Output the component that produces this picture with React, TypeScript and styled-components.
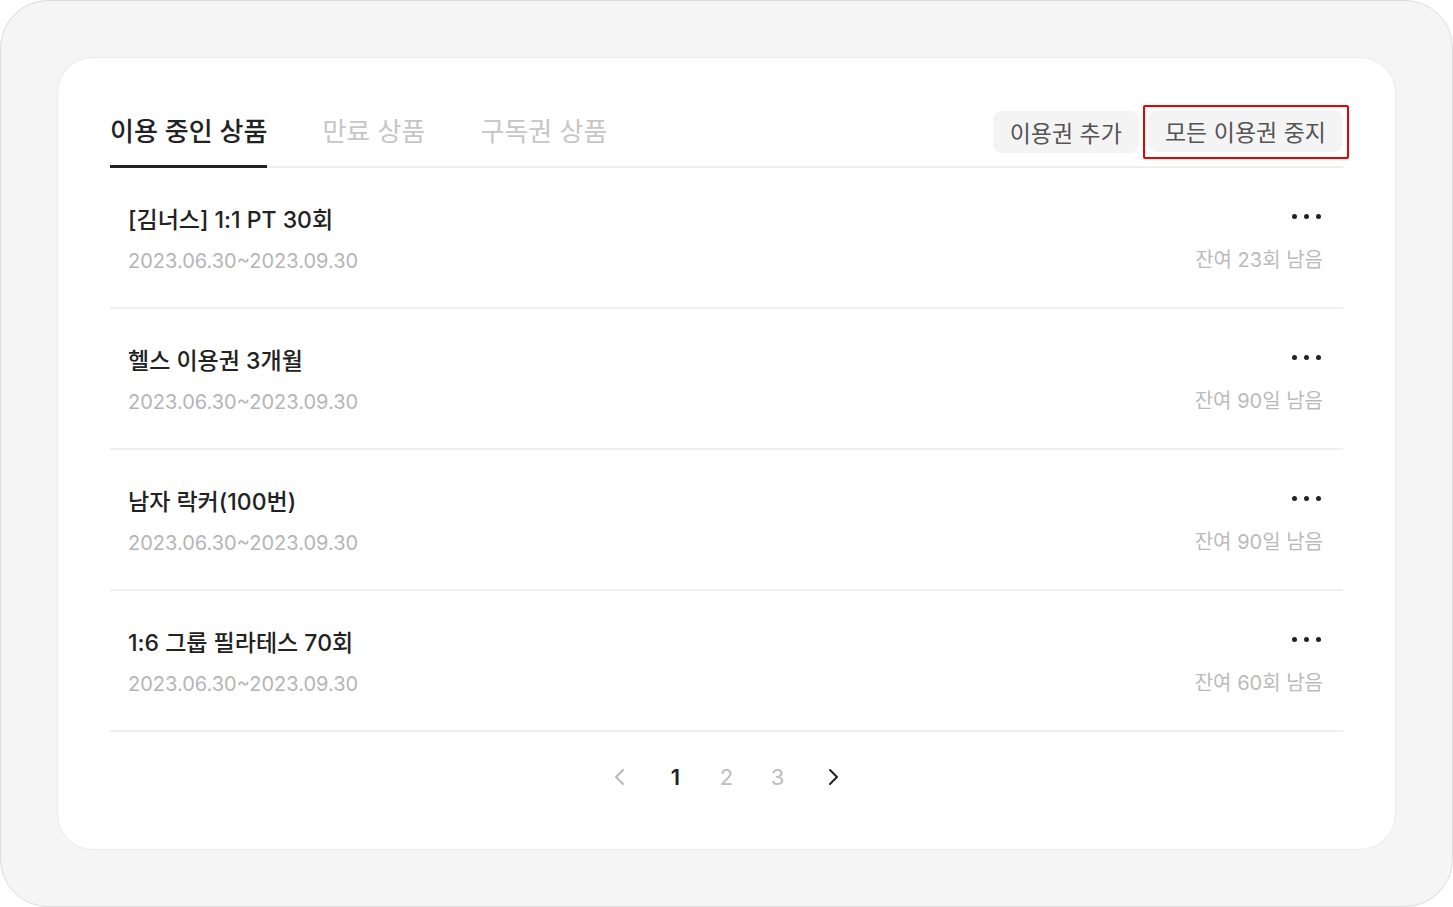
import React from "react";
import styled, { createGlobalStyle } from "styled-components";

const GlobalStyle = createGlobalStyle`
  html, body { margin: 0; padding: 0; background: #ffffff; }
  body { font-family: Inter, "Noto Sans CJK KR", sans-serif; }
  * { box-sizing: border-box; }
`;

const Frame = styled.div`
  width: 1453px;
  height: 907px;
  background: #f5f5f5;
  border: 1px solid #dcdcdc;
  border-radius: 48px;
  padding: 56px;
`;

const Card = styled.div`
  height: 793px;
  background: #ffffff;
  border: 1px solid #ebebeb;
  border-radius: 36px;
  padding: 47px 52px 0 52px;
  display: flex;
  flex-direction: column;
`;

const Header = styled.div`
  display: flex;
  align-items: flex-end;
  justify-content: space-between;
  border-bottom: 2px solid #eeeeee;
`;

const Tabs = styled.div`
  display: flex;
  gap: 55px;
`;

const Tab = styled.div<{ $active?: boolean }>`
  font-size: 26px;
  line-height: 34px;
  padding-bottom: 16px;
  margin-bottom: -2px;
  border-bottom: 3px solid ${(p) => (p.$active ? "#222222" : "transparent")};
  color: ${(p) => (p.$active ? "#222222" : "#c6c6c6")};
  font-weight: ${(p) => (p.$active ? 500 : 400)};
`;

const Actions = styled.div`
  display: flex;
  align-items: center;
  gap: 4px;
  padding-bottom: 7px;
`;

const Highlight = styled.div`
  border: 2px solid #ee0000;
  border-radius: 2px;
  padding: 3px 4px 5px 3px;
  margin-right: -6px;
`;

const ActionButton = styled.button`
  display: block;
  height: 42px;
  padding: 0 17px;
  border: none;
  border-radius: 9px;
  background: #f4f4f4;
  color: #555555;
  font-family: Inter, "Noto Sans CJK KR", sans-serif;
  font-size: 23px;
`;

const List = styled.div`
  display: flex;
  flex-direction: column;
`;

const Row = styled.div`
  height: 141px;
  border-bottom: 2px solid #efefef;
  padding: 36px 20px 0 18px;
  display: flex;
  justify-content: space-between;
`;

const Left = styled.div`
  display: flex;
  flex-direction: column;
  gap: 11px;
`;

const Title = styled.div`
  font-size: 23px;
  line-height: 32px;
  color: #222222;
  font-weight: 450;
`;

const Period = styled.div`
  font-size: 20px;
  line-height: 28px;
  color: #b5b5b5;
`;

const Right = styled.div`
  display: flex;
  flex-direction: column;
  align-items: flex-end;
`;

const MoreButton = styled.div`
  display: flex;
  gap: 7px;
  height: 28px;
  align-items: center;
  padding-right: 2px;
  margin-top: -2px;
  margin-bottom: 16px;
`;

const Dot = styled.span`
  width: 5px;
  height: 5px;
  border-radius: 50%;
  background: #222222;
`;

const Remain = styled.div`
  font-size: 20px;
  line-height: 28px;
  color: #bababa;
`;

const Pagination = styled.div`
  display: flex;
  justify-content: center;
  align-items: center;
  padding-top: 30px;
`;

const PageArrow = styled.div`
  width: 60px;
  height: 30px;
  display: flex;
  align-items: center;
  justify-content: center;
`;

const PageNum = styled.div<{ $active?: boolean }>`
  width: 51px;
  text-align: center;
  font-size: 22px;
  line-height: 30px;
  font-weight: ${(p) => (p.$active ? 600 : 400)};
  color: ${(p) => (p.$active ? "#222222" : "#bdbdbd")};
`;

const items = [
  { title: "[김너스] 1:1 PT 30회", remain: "잔여 23회 남음" },
  { title: "헬스 이용권 3개월", remain: "잔여 90일 남음" },
  { title: "남자 락커(100번)", remain: "잔여 90일 남음" },
  { title: "1:6 그룹 필라테스 70회", remain: "잔여 60회 남음" },
];

const Chevron = ({ dir, color }: { dir: "left" | "right"; color: string }) => (
  <svg width="12" height="20" viewBox="0 0 12 20" fill="none">
    <polyline
      points={dir === "left" ? "9,3 2,10 9,17" : "3,3 10,10 3,17"}
      stroke={color}
      strokeWidth="2"
      strokeLinecap="round"
      strokeLinejoin="round"
    />
  </svg>
);

export default function App() {
  return (
    <>
      <GlobalStyle />
      <Frame>
        <Card>
          <Header>
            <Tabs>
              <Tab $active>이용 중인 상품</Tab>
              <Tab>만료 상품</Tab>
              <Tab>구독권 상품</Tab>
            </Tabs>
            <Actions>
              <ActionButton>이용권 추가</ActionButton>
              <Highlight>
                <ActionButton>모든 이용권 중지</ActionButton>
              </Highlight>
            </Actions>
          </Header>
          <List>
            {items.map((it) => (
              <Row key={it.title}>
                <Left>
                  <Title>{it.title}</Title>
                  <Period>2023.06.30~2023.09.30</Period>
                </Left>
                <Right>
                  <MoreButton>
                    <Dot />
                    <Dot />
                    <Dot />
                  </MoreButton>
                  <Remain>{it.remain}</Remain>
                </Right>
              </Row>
            ))}
          </List>
          <Pagination>
            <PageArrow>
              <Chevron dir="left" color="#b8b8b8" />
            </PageArrow>
            <PageNum $active>1</PageNum>
            <PageNum>2</PageNum>
            <PageNum>3</PageNum>
            <PageArrow>
              <Chevron dir="right" color="#222222" />
            </PageArrow>
          </Pagination>
        </Card>
      </Frame>
    </>
  );
}
